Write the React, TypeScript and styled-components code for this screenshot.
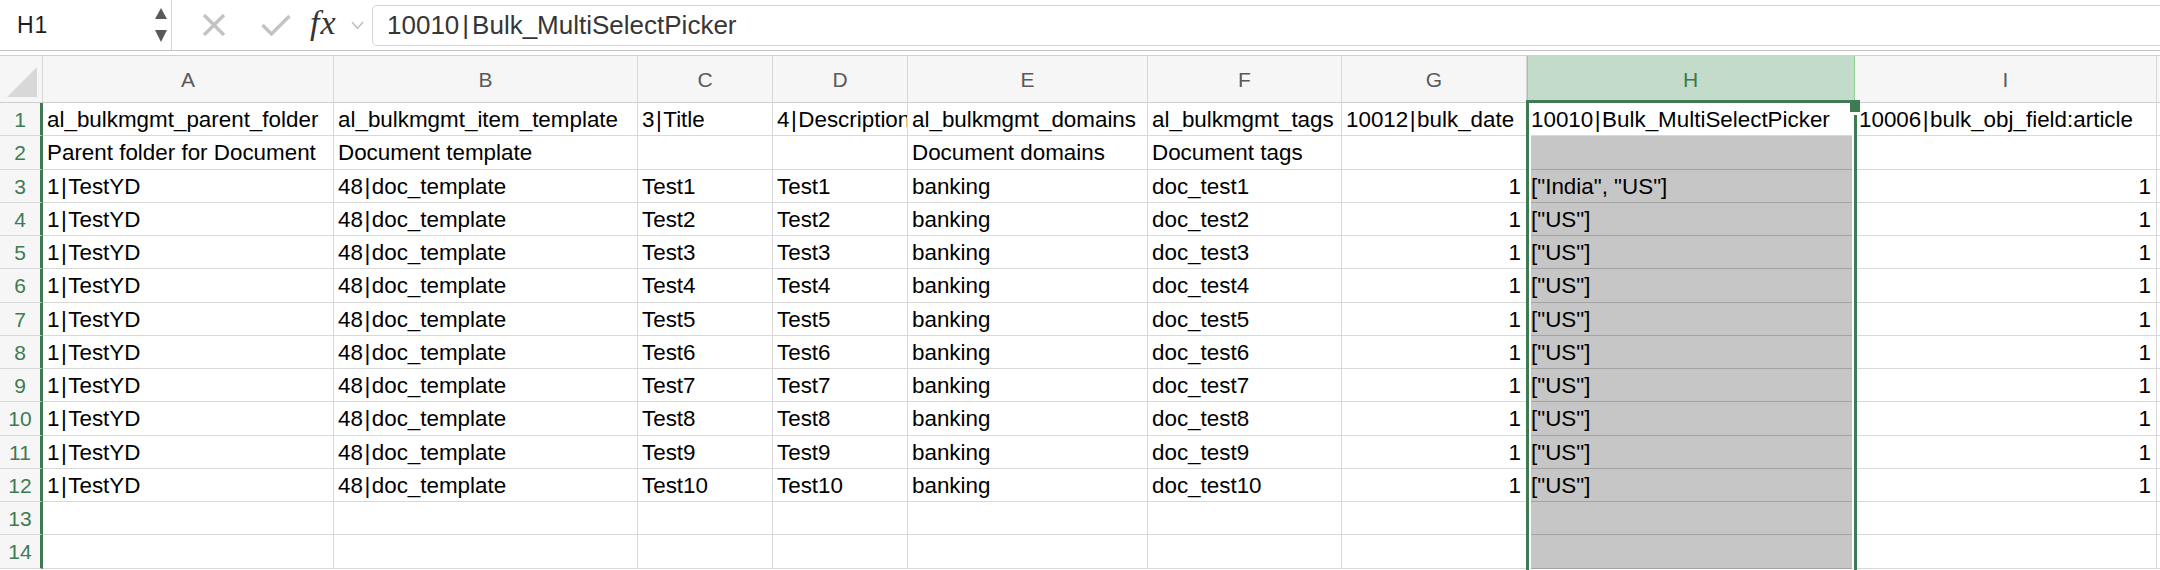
import React from "react";
import styled, { createGlobalStyle } from "styled-components";

const GREEN = "#3e7b52";

const columns = [
  { key: "A", width: 291 },
  { key: "B", width: 304 },
  { key: "C", width: 135 },
  { key: "D", width: 135 },
  { key: "E", width: 240 },
  { key: "F", width: 194 },
  { key: "G", width: 185 },
  { key: "H", width: 328 },
  { key: "I", width: 302 },
];

const SELECTED_COL = "H";
const ROW_NUM_WIDTH = 43;
const HEADER_HEIGHT = 47;
const ROW_HEIGHT = 33.25;

const testRows = Array.from({ length: 10 }, (_, i) => {
  const n = i + 1;
  return [
    "1|TestYD",
    "48|doc_template",
    `Test${n}`,
    `Test${n}`,
    "banking",
    `doc_test${n}`,
    "1",
    n === 1 ? '["India", "US"]' : '["US"]',
    "1",
  ];
});

const rows: string[][] = [
  [
    "al_bulkmgmt_parent_folder",
    "al_bulkmgmt_item_template",
    "3|Title",
    "4|Description",
    "al_bulkmgmt_domains",
    "al_bulkmgmt_tags",
    "10012|bulk_date",
    "10010|Bulk_MultiSelectPicker",
    "10006|bulk_obj_field:article",
  ],
  ["Parent folder for Document", "Document template", "", "", "Document domains", "Document tags", "", "", ""],
  ...testRows,
  ["", "", "", "", "", "", "", "", ""],
  ["", "", "", "", "", "", "", "", ""],
];

const withPipes = (text: string) => {
  const parts = text.split("|");
  return parts.map((p, i) => (
    <React.Fragment key={i}>
      {i > 0 && <Pipe>|</Pipe>}
      {p}
    </React.Fragment>
  ));
};

const App: React.FC = () => {
  const selIndex = columns.findIndex((c) => c.key === SELECTED_COL);
  const selLeft = ROW_NUM_WIDTH + columns.slice(0, selIndex).reduce((s, c) => s + c.width, 0) - 1;
  const selWidth = columns[selIndex].width + 3;

  return (
    <Page>
      <GlobalStyle />
      <FormulaBar>
        <NameBox>
          <span>H1</span>
          <svg width="12" height="36" viewBox="0 0 12 36">
            <path d="M6 0 L12 11 L0 11 Z" fill="#5a5a5a" />
            <path d="M0 22 L12 22 L6 34 Z" fill="#5a5a5a" />
          </svg>
        </NameBox>
        <Actions>
          <svg width="24" height="22" viewBox="0 0 24 22">
            <path d="M2 1 L22 21 M22 1 L2 21" stroke="#c3c3c3" strokeWidth="3.4" />
          </svg>
          <svg width="30" height="22" viewBox="0 0 30 22">
            <path d="M1.5 11 L10.5 20 L28.5 2" stroke="#c3c3c3" strokeWidth="3.4" fill="none" />
          </svg>
          <Fx>fx</Fx>
          <svg width="13" height="9" viewBox="0 0 13 9">
            <path d="M1 1 L6.5 7.5 L12 1" stroke="#bdbdbd" strokeWidth="1.4" fill="none" />
          </svg>
        </Actions>
        <FormulaInput>{withPipes("10010|Bulk_MultiSelectPicker")}</FormulaInput>
      </FormulaBar>

      <Sheet>
        <Corner>
          <svg width="30" height="30" viewBox="0 0 30 30">
            <path d="M30 0 L30 30 L0 30 Z" fill="#d8d8d8" />
          </svg>
        </Corner>
        {columns.map((c) => (
          <ColHeader key={c.key} $selected={c.key === SELECTED_COL}>
            {c.key}
          </ColHeader>
        ))}
        <ColHeader />

        {rows.map((row, r) => (
          <React.Fragment key={r}>
            <RowNum>{r + 1}</RowNum>
            {row.map((value, c) => {
              const inSel = columns[c].key === SELECTED_COL;
              return (
                <Cell
                  key={c}
                  $right={/^\d+$/.test(value)}
                  $shaded={inSel && r > 0}
                >
                  {withPipes(value)}
                </Cell>
              );
            })}
            <Cell />
          </React.Fragment>
        ))}

        <Selection
          style={{
            left: selLeft,
            top: HEADER_HEIGHT - 3,
            width: selWidth,
            height: rows.length * ROW_HEIGHT + 20,
          }}
        >
          <Handle />
        </Selection>
      </Sheet>
    </Page>
  );
};

export default App;

const GlobalStyle = createGlobalStyle`
  html, body {
    margin: 0;
    padding: 0;
    background: #ffffff;
  }
  body {
    font-family: "Liberation Sans", Arial, sans-serif;
    overflow: hidden;
  }
`;

const Page = styled.div`
  width: 2160px;
  height: 570px;
  overflow: hidden;
  background: #ffffff;
`;

const FormulaBar = styled.div`
  display: flex;
  align-items: stretch;
  height: 51px;
  box-sizing: border-box;
  border-bottom: 1px solid #c2c2c2;
  overflow: hidden;
`;

const NameBox = styled.div`
  width: 172px;
  flex-shrink: 0;
  box-sizing: border-box;
  border-right: 1px solid #d4d4d4;
  display: flex;
  align-items: center;
  justify-content: space-between;
  padding: 0 4px 0 17px;
  font-size: 23px;
  letter-spacing: 1px;
  color: #1d1d1d;

  svg {
    margin-top: 2px;
  }
`;

const Actions = styled.div`
  display: flex;
  align-items: center;
  padding-left: 30px;

  svg:nth-child(1) {
    margin-right: 35px;
  }
  svg:nth-child(2) {
    margin-right: 19px;
  }
`;

const Fx = styled.span`
  font-family: "Liberation Serif", "Times New Roman", serif;
  font-style: italic;
  font-size: 34px;
  letter-spacing: 1px;
  color: #333333;
  margin-right: 12px;
  margin-top: -4px;
  width: 29px;
`;

const FormulaInput = styled.div`
  flex: 1;
  margin: 5px -12px 4px 8px;
  border: 1px solid #d4d4d4;
  border-radius: 5px;
  display: flex;
  align-items: center;
  padding-left: 14px;
  font-size: 26px;
  color: #363636;
  white-space: nowrap;

  span {
    margin: 0 3px;
  }
`;

const Pipe = styled.span`
  margin: 0 1.5px;
`;

const Sheet = styled.div`
  position: relative;
  margin-top: 4px;
  border-top: 1px solid #d0d0d0;
  display: grid;
  grid-template-columns: ${ROW_NUM_WIDTH}px ${columns.map((c) => `${c.width}px`).join(" ")} 1fr;
  grid-template-rows: ${HEADER_HEIGHT}px;
  grid-auto-rows: ${ROW_HEIGHT}px;
`;

const Corner = styled.div`
  background: #f6f6f6;
  border-right: 1px solid #d6d6d6;
  border-bottom: 1px solid #cfcfcf;
  display: flex;
  align-items: flex-end;
  justify-content: flex-end;
  padding: 0 5px 5px 0;
`;

const ColHeader = styled.div<{ $selected?: boolean }>`
  background: ${(p) => (p.$selected ? "#c3dcc9" : "#f6f6f6")};
  color: ${(p) => (p.$selected ? "#3b7a50" : "#5a5a5a")};
  border-right: 1px solid ${(p) => (p.$selected ? "#8fd093" : "#d8d8d8")};
  border-bottom: 1px solid #cfcfcf;
  box-shadow: ${(p) => (p.$selected ? "inset 1px 0 0 #8fd093" : "none")};
  display: flex;
  align-items: center;
  justify-content: center;
  font-size: 21px;
  padding-top: 2px;
  box-sizing: border-box;
`;

const RowNum = styled.div`
  background: #f6f6f6;
  border-bottom: 1px solid #d8d8d8;
  border-right: 3px solid ${GREEN};
  color: ${GREEN};
  font-size: 21px;
  line-height: 32px;
  padding-top: 1px;
  text-align: center;
  box-sizing: border-box;
`;

const Cell = styled.div<{ $right?: boolean; $shaded?: boolean }>`
  background: ${(p) => (p.$shaded ? "#c6c6c6" : "#ffffff")};
  border-right: 1px solid #d9d9d9;
  border-bottom: 1px solid ${(p) => (p.$shaded ? "#a4a4a4" : "#d9d9d9")};
  box-sizing: border-box;
  padding: 1px 5px 0 4px;
  font-size: 22.4px;
  line-height: 32px;
  color: #000000;
  text-align: ${(p) => (p.$right ? "right" : "left")};
  white-space: nowrap;
  overflow: hidden;
`;

const Selection = styled.div`
  position: absolute;
  box-sizing: border-box;
  border: 3px solid ${GREEN};
  box-shadow: inset 0 0 0 2px #ffffff;
  pointer-events: none;
`;

const Handle = styled.div`
  position: absolute;
  top: -3px;
  right: -6px;
  width: 10px;
  height: 12px;
  background: ${GREEN};
  box-shadow: 0 3px 0 #ffffff;
`;
